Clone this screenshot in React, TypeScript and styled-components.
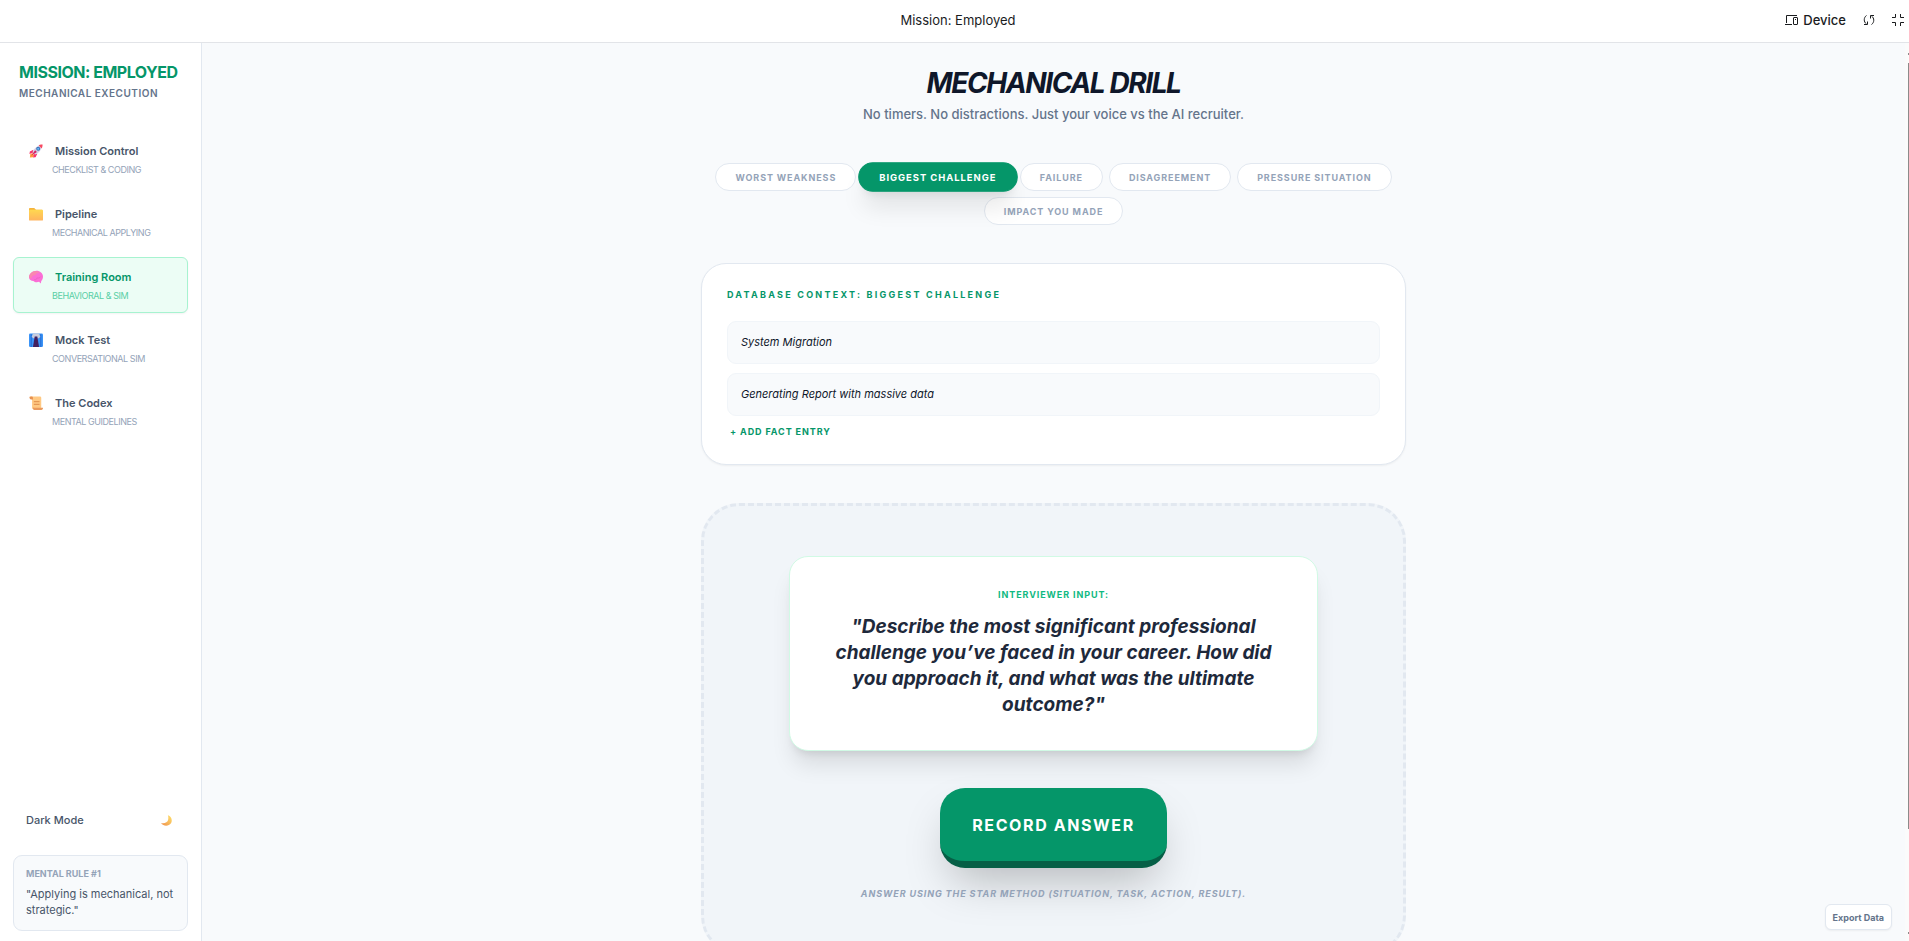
import React, { useState } from "react";
import styled, { createGlobalStyle, css } from "styled-components";

const GlobalStyle = createGlobalStyle`
  *, *::before, *::after { box-sizing: border-box; }
  html, body, #root { height: 100%; }
  body {
    margin: 0;
    overflow: hidden;
    background: #ffffff;
    color: #0f172a;
    font-family: Inter, "Liberation Sans", sans-serif;
  }
  button, input { font-family: inherit; }
  button { cursor: pointer; }
  h1, h2, p { margin: 0; }
`;

const Page = styled.div`
  display: flex;
  flex-direction: column;
  height: 100vh;
`;

const TopBar = styled.header`
  display: grid;
  grid-template-columns: 1fr auto 1fr;
  align-items: center;
  flex: none;
  height: 43px;
  padding: 0 5px 2px 12px;
  border-bottom: 1px solid #e2e4e8;
`;

const TopTitle = styled.span`
  grid-column: 2;
  font-size: 13px;
  line-height: 18px;
  color: #1a1c1e;
`;

const TopActions = styled.div`
  display: flex;
  justify-content: flex-end;
  align-items: center;
  gap: 17px;
`;

const TopButton = styled.button`
  display: flex;
  align-items: center;
  gap: 5px;
  padding: 0;
  border: 0;
  background: none;
  color: #1a1c1e;
  font-size: 13px;
  font-weight: 500;
  line-height: 18px;
  svg { display: block; }
`;

const Body = styled.div`
  display: flex;
  flex: 1;
  min-height: 0;
`;

const Sidebar = styled.aside`
  display: flex;
  flex-direction: column;
  flex: none;
  width: 202px;
  padding: 19px 13px 10px;
  border-right: 1px solid #e2e8f0;
`;

const Brand = styled.div`
  padding: 0 6px;
`;

const BrandName = styled.h2`
  font-size: 16px;
  font-weight: 700;
  line-height: 20px;
  letter-spacing: -0.03em;
  color: #059669;
  white-space: nowrap;
`;

const BrandTag = styled.p`
  margin-top: 4px;
  font-size: 10px;
  font-weight: 600;
  line-height: 14px;
  letter-spacing: 0.05em;
  color: #64748b;
`;

const Nav = styled.nav`
  display: flex;
  flex-direction: column;
  gap: 7px;
  margin-top: 31px;
`;

const NavItem = styled.button<{ $active?: boolean }>`
  display: flex;
  flex-direction: column;
  height: 56px;
  padding: 11px 15px;
  border: 1px solid transparent;
  border-radius: 6px;
  background: none;
  color: #475569;
  text-align: left;
  ${(p) =>
    p.$active &&
    css`
      border-color: #a7f3d0;
      background: #ecfdf5;
      color: #059669;
      box-shadow: 0 1px 2px rgba(0, 0, 0, 0.05);
    `}
`;

const NavLabel = styled.span`
  display: flex;
  align-items: center;
  gap: 12px;
  font-size: 11px;
  font-weight: 600;
  line-height: 16px;
`;

const NavHint = styled.span<{ $active?: boolean }>`
  margin: 4px 0 0 23px;
  font-size: 9px;
  font-weight: 400;
  line-height: 13px;
  letter-spacing: -0.05em;
  text-transform: uppercase;
  color: ${(p) => (p.$active ? "#59cfa5" : "#94a3b8")};
`;

const SidebarFoot = styled.div`
  display: flex;
  flex-direction: column;
  gap: 19px;
  margin-top: auto;
`;

const ThemeToggle = styled.button`
  display: flex;
  align-items: center;
  justify-content: space-between;
  padding: 8px 16px 8px 13px;
  border: 0;
  background: none;
  color: #475569;
  font-size: 11px;
  font-weight: 500;
  line-height: 16px;
`;

const RuleCard = styled.section`
  padding: 11px 8px 12px 12px;
  border: 1px solid #e2e8f0;
  border-radius: 9px;
  background: #f8fafc;
`;

const RuleTitle = styled.p`
  font-size: 9px;
  font-weight: 700;
  line-height: 14px;
  color: #94a3b8;
`;

const RuleText = styled.p`
  margin-top: 5px;
  font-size: 11px;
  line-height: 16px;
  color: #475569;
`;

const Main = styled.main`
  position: relative;
  flex: 1;
  min-width: 0;
  overflow: hidden;
  background: #f8fafc;
`;

const Column = styled.div`
  display: flex;
  flex-direction: column;
  max-width: 705px;
  margin: 0 auto;
  padding: 20px 0;
`;

const Title = styled.h1`
  font-size: 28px;
  font-weight: 700;
  font-style: italic;
  line-height: 40px;
  letter-spacing: -0.05em;
  text-align: center;
  text-transform: uppercase;
`;

const Lead = styled.p`
  margin-top: 2px;
  font-size: 13px;
  font-weight: 500;
  line-height: 19px;
  text-align: center;
  color: #64748b;
`;

const Topics = styled.div`
  display: flex;
  flex-wrap: wrap;
  justify-content: center;
  gap: 6px;
  margin-top: 39px;
`;

const Topic = styled.button<{ $active?: boolean }>`
  height: 28px;
  padding: 0 19px;
  border: 1px solid #e2e8f0;
  border-radius: 14px;
  background: #ffffff;
  color: #94a3b8;
  font-size: 9px;
  font-weight: 700;
  letter-spacing: 0.1em;
  text-transform: uppercase;
  ${(p) =>
    p.$active &&
    css`
      border-color: #059669;
      background: #059669;
      color: #ffffff;
      transform: scale(1.05);
      box-shadow: 0 18px 22px -4px rgba(0, 0, 0, 0.1), 0 7px 9px -5px rgba(0, 0, 0, 0.1);
    `}
`;

const FactCard = styled.section`
  margin-top: 38px;
  padding: 24px 25px 25px;
  border: 1px solid #e2e8f0;
  border-radius: 25px;
  background: #ffffff;
  box-shadow: 0 1px 2px rgba(0, 0, 0, 0.05);
`;

const FactTitle = styled.h2`
  font-size: 9px;
  font-weight: 700;
  line-height: 14px;
  letter-spacing: 0.25em;
  text-transform: uppercase;
  color: #059669;
`;

const FactList = styled.div`
  display: flex;
  flex-direction: column;
  gap: 9px;
  margin-top: 19px;
`;

const FactInput = styled.input`
  width: 100%;
  height: 43px;
  padding: 0 13px 2px;
  border: 1px solid #f1f5f9;
  border-radius: 9px;
  background: #f8fafc;
  color: #0f172a;
  font-size: 11px;
  font-style: italic;
`;

const AddFact = styled.button`
  display: block;
  margin-top: 9px;
  padding: 0 3px;
  border: 0;
  background: none;
  color: #059669;
  font-size: 9px;
  font-weight: 700;
  line-height: 14px;
  letter-spacing: 0.1em;
  text-transform: uppercase;
`;

const Stage = styled.section`
  display: flex;
  flex-direction: column;
  align-items: center;
  margin-top: 38px;
  padding: 50px;
  border: 3px dashed #e2e8f0;
  border-radius: 38px;
  background: #f1f5f9;
`;

const Question = styled.div`
  width: 100%;
  max-width: 529px;
  padding: 31px 32px 32px;
  border: 1px solid #d1fae5;
  border-radius: 19px;
  background: #ffffff;
  text-align: center;
  box-shadow: 0 18px 22px -4px rgba(0, 0, 0, 0.1), 0 7px 9px -5px rgba(0, 0, 0, 0.1);
`;

const QuestionLabel = styled.p`
  font-size: 9px;
  font-weight: 700;
  line-height: 13px;
  letter-spacing: 0.1em;
  text-transform: uppercase;
  color: #10b981;
`;

const QuestionText = styled.p`
  margin-top: 13px;
  font-size: 19px;
  font-weight: 700;
  font-style: italic;
  line-height: 26px;
  color: #1e293b;
`;

const RecordButton = styled.button`
  height: 80px;
  margin-top: 37px;
  padding: 0 32px;
  border: 0;
  border-bottom: 7px solid #065f46;
  border-radius: 25px;
  background: #059669;
  color: #ffffff;
  font-size: 16px;
  font-weight: 700;
  letter-spacing: 0.1em;
  text-transform: uppercase;
  box-shadow: 0 22px 45px -11px rgba(0, 0, 0, 0.25);
`;

const StageHint = styled.p`
  margin-top: 19px;
  font-size: 9px;
  font-weight: 700;
  font-style: italic;
  line-height: 14px;
  letter-spacing: 0.1em;
  text-transform: uppercase;
  color: #94a3b8;
`;

const ExportButton = styled.button`
  position: absolute;
  right: 13px;
  bottom: 11px;
  height: 26px;
  padding: 0 7px;
  border: 1px solid #e2e8f0;
  border-radius: 6px;
  background: #ffffff;
  color: #64748b;
  font-size: 9px;
  font-weight: 700;
  box-shadow: 0 1px 2px rgba(0, 0, 0, 0.05);
`;

const Rail = styled.div`
  display: flex;
  flex-direction: column;
  align-items: flex-end;
  flex: none;
  width: 4px;
  padding: 10px 0 7px;
  background: #fbfbfb;
`;

const Arrow = styled.span`
  width: 1px;
  height: 2px;
  background: #8b8b8b;
`;

const Thumb = styled.div`
  flex: 1;
  width: 1px;
  margin: 8px 0 103px;
  background: #8b8b8b;
`;

const Rocket = () => (
  <svg width="14" height="14" viewBox="0 0 32 32" aria-hidden="true">
    <path d="M2 31 3 23l6-2 3 5-3 4z" fill="#ff9a3d" />
    <path d="m10 13-8 4-1 6 8-3zM19 22l-4 8-6 1 3-8z" fill="#f8326b" />
    <path d="M8 19C11 10 19 3 29 2c1 10-6 18-15 22z" fill="#d3cfe4" />
    <path d="M22 3c4-2 8-2 9-2 0 2 0 5-2 9z" fill="#f8475f" />
    <path d="m5 27 9-13 4 4z" fill="#d51f62" />
    <circle cx="21" cy="11" r="4.500" fill="#3d6fb5" />
    <circle cx="21" cy="11" r="2.500" fill="#5fb8f5" />
  </svg>
);

const Folder = () => (
  <svg width="14" height="14" viewBox="0 0 32 32" aria-hidden="true">
    <defs>
      <linearGradient id="folder" x1="0" y1="0" x2="0" y2="1">
        <stop offset="0" stopColor="#ffd84f" />
        <stop offset="1" stopColor="#ffb45f" />
      </linearGradient>
    </defs>
    <path d="M0 4a2 2 0 0 1 2-2h10l4 4h14v8H0z" fill="#f5b43c" />
    <rect y="6" width="32" height="25" rx="2" fill="url(#folder)" />
  </svg>
);

const Brain = () => (
  <svg width="14" height="14" viewBox="0 0 32 32" aria-hidden="true">
    <path d="M0 17C0 9 7 2 15 2c9-1 17 5 17 13 0 5-2 8-4 10l-1 6-4-4c-5 2-10 1-13-2-5 0-10-3-10-8z" fill="#fb6fd6" />
    <path d="M0 17C0 9 7 2 15 2c5 0 8 2 9 4-6 0-9 3-9 6-5-1-9 1-10 8z" fill="#f987b0" />
    <path d="M12 22c4 1 6-1 6-4 4 1 7 0 9-3" fill="none" stroke="#e65fbd" strokeWidth="1.500" />
  </svg>
);

const Necktie = () => (
  <svg width="14" height="14" viewBox="0 0 32 32" aria-hidden="true">
    <rect y="1" width="32" height="31" rx="3" fill="#3b94f7" />
    <path d="M5 3v29M27 3v29" stroke="#1f62cc" strokeWidth="2" />
    <path d="M9 1h14l3 8-6 4-4-5-4 5-6-4z" fill="#c9cddd" />
    <path d="M13 8h6l1 6 3 18H9l3-18z" fill="#43205f" />
  </svg>
);

const Scroll = () => (
  <svg width="14" height="14" viewBox="0 0 32 32" aria-hidden="true">
    <path d="M4 1h21a3 3 0 0 1 3 3v25H7V8z" fill="#ffc983" />
    <path d="M2 1h4a3 3 0 0 1 3 3v4H4C1 6 0 3 2 1z" fill="#e8914f" />
    <path d="M13 27h19c0 3-1 5-4 5H12c-3-1-3-4-3-6z" fill="#e99a5e" />
    <path d="M11 13h13M11 19h13" stroke="#d98544" strokeWidth="2" />
  </svg>
);

const Moon = () => (
  <svg width="11" height="11" viewBox="0 0 32 32" aria-hidden="true">
    <defs>
      <linearGradient id="moon" x1="1" y1="0" x2="0" y2="1">
        <stop offset="0" stopColor="#ffe36b" />
        <stop offset="1" stopColor="#ef8f4d" />
      </linearGradient>
    </defs>
    <path d="M20 1c11 3 14 15 9 23-6 9-21 10-29 0 8 0 15-1 19-6 3-5 3-12 1-17z" fill="url(#moon)" />
  </svg>
);

const DeviceIcon = () => (
  <svg width="13" height="12" viewBox="0 0 13 12" fill="none" stroke="currentColor" aria-hidden="true">
    <path d="M12 1.500H1.500V9M0 10.500h7" />
    <rect x="8.500" y="3.500" width="4" height="7" rx="0.500" />
    <path d="M10 5.500h1" />
  </svg>
);

const SyncIcon = () => (
  <svg width="12" height="12" viewBox="0 0 12 12" fill="none" stroke="currentColor" aria-hidden="true">
    <path d="M3.500 1.500C.500 3.500.500 8 3.500 10M1 10.500h3.500V7.500M8.500 10.500C11.500 8.500 11.500 4 8.500 2M11 1.500H7.500v3" />
  </svg>
);

const CollapseIcon = () => (
  <svg width="12" height="12" viewBox="0 0 12 12" fill="none" stroke="currentColor" aria-hidden="true">
    <path d="M0 3.500h3.500V0M8.500 0v3.500H12M0 8.500h3.500V12M8.500 12V8.500H12" />
  </svg>
);

const navItems = [
  { label: "Mission Control", hint: "Checklist & Coding", Icon: Rocket },
  { label: "Pipeline", hint: "Mechanical Applying", Icon: Folder },
  { label: "Training Room", hint: "Behavioral & Sim", Icon: Brain },
  { label: "Mock Test", hint: "Conversational Sim", Icon: Necktie },
  { label: "The Codex", hint: "Mental Guidelines", Icon: Scroll },
];

const topics = [
  "Worst Weakness",
  "Biggest Challenge",
  "Failure",
  "Disagreement",
  "Pressure Situation",
  "Impact You Made",
];

export default function App() {
  const [page, setPage] = useState("Training Room");
  const [topic, setTopic] = useState("Biggest Challenge");
  const [facts, setFacts] = useState(["System Migration", "Generating Report with massive data"]);

  return (
    <Page>
      <GlobalStyle />
      <TopBar>
        <TopTitle>Mission: Employed</TopTitle>
        <TopActions>
          <TopButton type="button"><DeviceIcon />Device</TopButton>
          <TopButton type="button" aria-label="Reload"><SyncIcon /></TopButton>
          <TopButton type="button" aria-label="Exit full screen"><CollapseIcon /></TopButton>
        </TopActions>
      </TopBar>
      <Body>
        <Sidebar>
          <Brand>
            <BrandName>MISSION: EMPLOYED</BrandName>
            <BrandTag>MECHANICAL EXECUTION</BrandTag>
          </Brand>
          <Nav>
            {navItems.map(({ label, hint, Icon }) => (
              <NavItem key={label} type="button" $active={label === page} onClick={() => setPage(label)}>
                <NavLabel><Icon />{label}</NavLabel>
                <NavHint $active={label === page}>{hint}</NavHint>
              </NavItem>
            ))}
          </Nav>
          <SidebarFoot>
            <ThemeToggle type="button">Dark Mode<Moon /></ThemeToggle>
            <RuleCard>
              <RuleTitle>MENTAL RULE #1</RuleTitle>
              <RuleText>"Applying is mechanical, not strategic."</RuleText>
            </RuleCard>
          </SidebarFoot>
        </Sidebar>
        <Main>
          <Column>
            <Title>Mechanical Drill</Title>
            <Lead>No timers. No distractions. Just your voice vs the AI recruiter.</Lead>
            <Topics>
              {topics.map((name) => (
                <Topic key={name} type="button" $active={name === topic} onClick={() => setTopic(name)}>
                  {name}
                </Topic>
              ))}
            </Topics>
            <FactCard>
              <FactTitle>Database Context: {topic}</FactTitle>
              <FactList>
                {facts.map((fact, i) => (
                  <FactInput
                    key={i}
                    aria-label={`Fact ${i + 1}`}
                    value={fact}
                    onChange={(e) => setFacts(facts.map((f, j) => (j === i ? e.target.value : f)))}
                  />
                ))}
              </FactList>
              <AddFact type="button" onClick={() => setFacts([...facts, ""])}>+ Add Fact Entry</AddFact>
            </FactCard>
            <Stage>
              <Question>
                <QuestionLabel>Interviewer Input:</QuestionLabel>
                <QuestionText>
                  "Describe the most significant professional challenge you’ve faced in your career. How did you
                  approach it, and what was the ultimate outcome?"
                </QuestionText>
              </Question>
              <RecordButton type="button">Record Answer</RecordButton>
              <StageHint>Answer using the STAR method (Situation, Task, Action, Result).</StageHint>
            </Stage>
          </Column>
          <ExportButton type="button">Export Data</ExportButton>
        </Main>
        <Rail>
          <Arrow />
          <Thumb />
          <Arrow />
        </Rail>
      </Body>
    </Page>
  );
}
